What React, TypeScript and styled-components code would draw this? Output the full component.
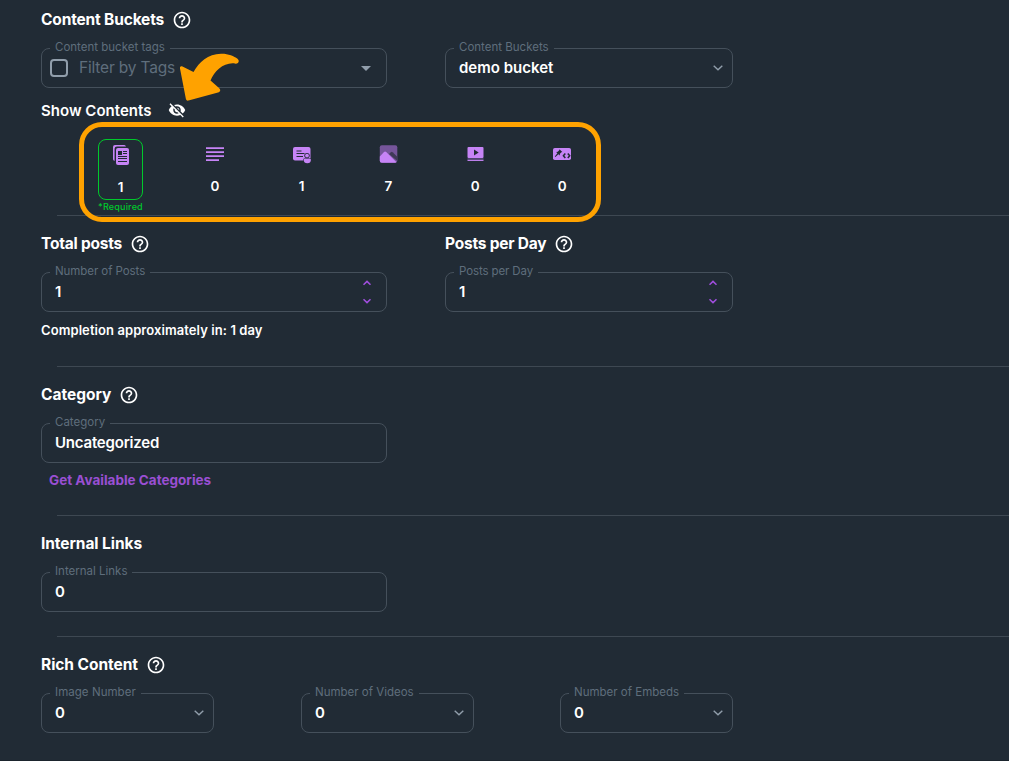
import React from "react";
import styled, { createGlobalStyle } from "styled-components";
import { MdHelpOutline, MdVisibilityOff } from "react-icons/md";

const Global = createGlobalStyle`
  * { box-sizing: border-box; }
  body {
    margin: 0;
    background: #212b35;
    color: #fff;
    font-family: Inter, "Liberation Sans", sans-serif;
    overflow: hidden;
  }
`;

const Page = styled.main`
  position: relative;
  width: 1009px;
  height: 761px;
  border-bottom: 1px solid #1b242d;
`;

const Section = styled.section<{ $height: number; $first?: boolean }>`
  height: ${(p) => p.$height}px;
  padding: ${(p) => (p.$first ? 8 : 16)}px 0 0 41px;
`;

const Divider = styled.hr`
  height: 1px;
  margin: 0 0 0 57px;
  border: 0;
  background: #3e4852;
`;

const Row = styled.div`
  display: flex;
`;

const Column = styled.div<{ $width: number; $gap?: number }>`
  width: ${(p) => p.$width}px;
  margin-right: ${(p) => p.$gap ?? 0}px;
`;

const Text = styled.span<{ $ls?: number }>`
  letter-spacing: ${(p) => p.$ls ?? 0}px;
  white-space: nowrap;
`;

const Heading = styled.h2`
  display: flex;
  align-items: center;
  gap: 8px;
  height: 24px;
  margin: 0 0 9px;
  font-size: 15.5px;
  font-weight: 700;
  line-height: 23px;

  span { padding-bottom: 1px; }
  svg { flex: none; }
`;

const Outline = styled.fieldset`
  min-width: 0;
  width: 100%;
  height: 47px;
  margin: 0;
  padding: 0;
  border: 1px solid #45505b;
  border-radius: 8px;
`;

const Legend = styled.legend`
  height: 15px;
  margin-left: 8px;
  padding: 0 5px;
  color: #5f6e7c;
  font-size: 11.5px;
  line-height: 13px;
`;

const Value = styled.div`
  display: flex;
  align-items: center;
  height: 24px;
  padding: 0 14px 0 13px;
  font-size: 15px;
  font-weight: 600;
  line-height: 24px;
`;

const Trailing = styled.span<{ $shift?: number }>`
  display: flex;
  flex-direction: column;
  gap: 12px;
  margin-left: auto;
  margin-right: ${(p) => p.$shift ?? 0}px;
`;

const TagBox = styled.span`
  width: 18px;
  height: 18px;
  margin: 0 11px 0 -5px;
  border: 2px solid #919eab;
  border-radius: 4px;
`;

const Placeholder = styled(Text)`
  color: #5f6e7c;
  font-size: 15.5px;
  font-weight: 400;
`;

const ShowContents = styled.div`
  display: flex;
  align-items: center;
  gap: 17px;
  height: 24px;
  margin-top: 10px;
  font-size: 15px;
  font-weight: 600;
`;

const Tiles = styled.div`
  display: grid;
  grid-template-columns: 73.5px repeat(5, 86.8px);
  margin: 17px 0 0 57px;
`;

const Tile = styled.div<{ $required?: boolean }>`
  display: flex;
  flex-direction: column;
  align-items: center;
  justify-self: ${(p) => (p.$required ? "start" : "center")};
  width: 45px;
  height: 61px;
  padding-top: ${(p) => (p.$required ? 5 : 4)}px;
  border: 1px solid ${(p) => (p.$required ? "#00c92c" : "transparent")};
  border-radius: 8px;
  font-size: 13.5px;
  font-weight: 600;
  line-height: 16px;

  svg { margin-bottom: 14px; }
`;

const Required = styled.div`
  margin: 1px 0 0 57px;
  color: #00c92c;
  font-size: 9px;
  font-weight: 500;
  line-height: 12px;
`;

const Note = styled.p`
  margin: 9px 0 0;
  font-size: 13px;
  font-weight: 600;
  line-height: 19px;
`;

const LinkButton = styled.button`
  display: block;
  margin: 7px 0 0 8px;
  padding: 0;
  border: 0;
  background: none;
  color: #9a4fd3;
  font: 700 13.5px/21px Inter, sans-serif;
`;

const Highlight = styled.div`
  position: absolute;
  top: 122px;
  left: 79px;
  width: 522px;
  height: 100px;
  border: 5px solid #ffa200;
  border-radius: 23px;
`;

const Arrow = styled.svg`
  position: absolute;
  top: 50px;
  left: 176px;
`;

const Help = () => <MdHelpOutline size={20} />;

const Chevron = () => (
  <svg width="10" height="6" viewBox="0 0 10 6" fill="none" stroke="#919eab" strokeWidth="1.4">
    <path d="M.7 .8 5 4.8 9.3 .8" />
  </svg>
);

const Steppers = () => (
  <>
    <svg width="8" height="6" viewBox="0 0 8 6" fill="none" stroke="#a24fe0" strokeWidth="1.5">
      <path d="M.5 4.8 4 1.4 7.5 4.8" />
    </svg>
    <svg width="8" height="6" viewBox="0 0 8 6" fill="none" stroke="#a24fe0" strokeWidth="1.5">
      <path d="M.5 1.2 4 4.6 7.5 1.2" />
    </svg>
  </>
);

const P = "#c684f6";
const D = "#212b35";

const ArticlesIcon = () => (
  <svg width="20" height="20" viewBox="0 0 20 20" fill={P}>
    <path d="M4 0h9a2 2 0 0 1 2 1.4H6A2.4 2.4 0 0 0 3.6 3.8V16A2 2 0 0 1 2 14V2a2 2 0 0 1 2-2z" />
    <rect x="5" y="3" width="13" height="17" rx="2" />
    <path d="M7 6h4v4H7zM12 6h4v1h-4zM12 8h4v1h-4zM7 11h9v1H7zM7 13h9v1H7zM7 16h9v1H7z" fill={D} />
  </svg>
);

const TextIcon = () => (
  <svg width="20" height="20" viewBox="0 0 20 20" fill={P}>
    <path d="M1 3.200h18v1.800H1zM1 7.300h18v1.800H1zM1 11.300h18v1.800H1zM1 15.200h13v1.800H1z" />
  </svg>
);

const CardIcon = () => (
  <svg width="20" height="20" viewBox="0 0 20 20">
    <rect x="1" y="3" width="17.500" height="13.500" rx="2" fill={P} />
    <path d="M4.500 7h5M4.500 9.500h8M4.500 12.500h6.500" stroke={D} strokeWidth="1.200" />
    <circle cx="15" cy="11.600" r="2.700" fill={D} />
    <path d="M11.300 17v-1.500a1 1 0 0 1 1-1h6.700v2.500z" fill={D} />
    <circle cx="15" cy="11.600" r="1.900" fill={P} />
    <path d="M11.800 15h7v1.300a3.500 3 0 0 1-7 0z" fill={P} />
  </svg>
);

const ImageIcon = () => (
  <svg width="20" height="20" viewBox="0 0 20 20">
    <rect x="1.800" y="1.300" width="17.500" height="17.400" rx="2" fill="#75559a" />
    <path d="M11 10l2-1.800a1.200 1.200 0 0 1 1.600 0l4.700 4.500V17z" fill="#3f3957" />
    <path d="M1.800 12.500 6 8.100a1.500 1.500 0 0 1 2.200 0L18.300 18a2 2 0 0 1-1 .7H3.800a2 2 0 0 1-2-2z" fill={P} />
  </svg>
);

const VideoIcon = () => (
  <svg width="20" height="20" viewBox="0 0 20 20">
    <rect x="2.500" y="3" width="16" height="11" rx="1" fill={P} />
    <path d="M9 5.500v6l4.700-3z" fill={D} />
    <path d="M2.500 16.300h16" stroke={P} strokeWidth="1.300" />
    <path d="M2.500 14.800h16" stroke="#65508a" strokeWidth="1" />
  </svg>
);

const EmbedIcon = () => (
  <svg width="20" height="20" viewBox="0 0 20 20">
    <rect x="1" y="4" width="18" height="12" rx="1.800" fill={P} />
    <path d="m7.500 5.200 2.800 2.800-.9.200-1.500 1.600-.1 1.600-1.400-1.200L3.400 13l-.6-.5 2.600-3.200-1.300-1.200 1.700-.3 1.600-1.700z" fill={D} />
    <path d="m13.300 9.500-1.900 2.300 1.900 2.300M15.800 9.500l1.900 2.300-1.900 2.300" fill="none" stroke={D} strokeWidth="1.500" />
  </svg>
);

const tiles = [
  { Icon: ArticlesIcon, count: 1, required: true },
  { Icon: TextIcon, count: 0 },
  { Icon: CardIcon, count: 1 },
  { Icon: ImageIcon, count: 7 },
  { Icon: VideoIcon, count: 0 },
  { Icon: EmbedIcon, count: 0 },
];

type FieldProps = {
  label: string;
  value: string;
  kind?: "select" | "number";
  labelSpacing?: number;
  spacing?: number;
};

const Field = ({ label, value, kind, labelSpacing, spacing }: FieldProps) => (
  <Outline>
    <Legend><Text $ls={labelSpacing}>{label}</Text></Legend>
    <Value>
      <Text $ls={spacing}>{value}</Text>
      {kind === "select" && <Trailing $shift={-5}><Chevron /></Trailing>}
      {kind === "number" && <Trailing $shift={1}><Steppers /></Trailing>}
    </Value>
  </Outline>
);

export default function App() {
  return (
    <Page>
      <Global />
      <Section $height={215} $first>
        <Heading><Text $ls={-0.16}>Content Buckets</Text><Help /></Heading>
        <Row>
          <Column $width={346} $gap={58}>
            <Outline>
              <Legend><Text>Content bucket tags</Text></Legend>
              <Value>
                <TagBox />
                <Placeholder $ls={-0.18}>Filter by Tags</Placeholder>
                <Trailing $shift={1}>
                  <svg width="10" height="5" viewBox="0 0 10 5"><path d="M0 0h10L5 5z" fill="#919eab" /></svg>
                </Trailing>
              </Value>
            </Outline>
          </Column>
          <Column $width={288}>
            <Field label="Content Buckets" value="demo bucket" kind="select" spacing={0} />
          </Column>
        </Row>
        <ShowContents><Text $ls={0.02}>Show Contents</Text><MdVisibilityOff size={18} /></ShowContents>
        <Tiles>
          {tiles.map(({ Icon, count, required }, i) => (
            <Tile key={i} $required={required}><Icon />{count}</Tile>
          ))}
        </Tiles>
        <Required><Text $ls={0.2}>*Required</Text></Required>
      </Section>
      <Divider />
      <Section $height={150}>
        <Row>
          <Column $width={346} $gap={58}>
            <Heading><Text $ls={-0.22}>Total posts</Text><Help /></Heading>
            <Field label="Number of Posts" value="1" kind="number" labelSpacing={-0.07} />
            <Note><Text $ls={0.08}>Completion approximately in: 1 day</Text></Note>
          </Column>
          <Column $width={288}>
            <Heading><Text $ls={-0.22}>Posts per Day</Text><Help /></Heading>
            <Field label="Posts per Day" value="1" kind="number" labelSpacing={-0.12} />
          </Column>
        </Row>
      </Section>
      <Divider />
      <Section $height={148}>
        <Column $width={346}>
          <Heading><Text>Category</Text><Help /></Heading>
          <Field label="Category" value="Uncategorized" spacing={-0.2} />
          <LinkButton><Text>Get Available Categories</Text></LinkButton>
        </Column>
      </Section>
      <Divider />
      <Section $height={120}>
        <Column $width={346}>
          <Heading><Text $ls={-0.07}>Internal Links</Text></Heading>
          <Field label="Internal Links" value="0" />
        </Column>
      </Section>
      <Divider />
      <Section $height={123}>
        <Heading><Text $ls={-0.05}>Rich Content</Text><Help /></Heading>
        <Row>
          <Column $width={173} $gap={87}><Field label="Image Number" value="0" kind="select" labelSpacing={0.05} /></Column>
          <Column $width={173} $gap={86}><Field label="Number of Videos" value="0" kind="select" /></Column>
          <Column $width={173}><Field label="Number of Embeds" value="0" kind="select" /></Column>
        </Row>
      </Section>
      <Highlight />
      <Arrow width="66" height="54" viewBox="176 50 66 54">
        <path
          d="M182.500 66.500 193.500 72C199 62 208 54 221 53.700C228 53.500 234 56 237.500 58.800C240.500 61.500 237.500 64.500 235 63.500C224 62 214.500 71 210.500 80.500L219 88C221 90 220.500 91.800 218 92.500L188.500 100.500C187 101 186 100 185.800 98.500L180 68.500C179.700 66.500 181 65.700 182.500 66.500Z"
          fill="#ffa200"
        />
      </Arrow>
    </Page>
  );
}
